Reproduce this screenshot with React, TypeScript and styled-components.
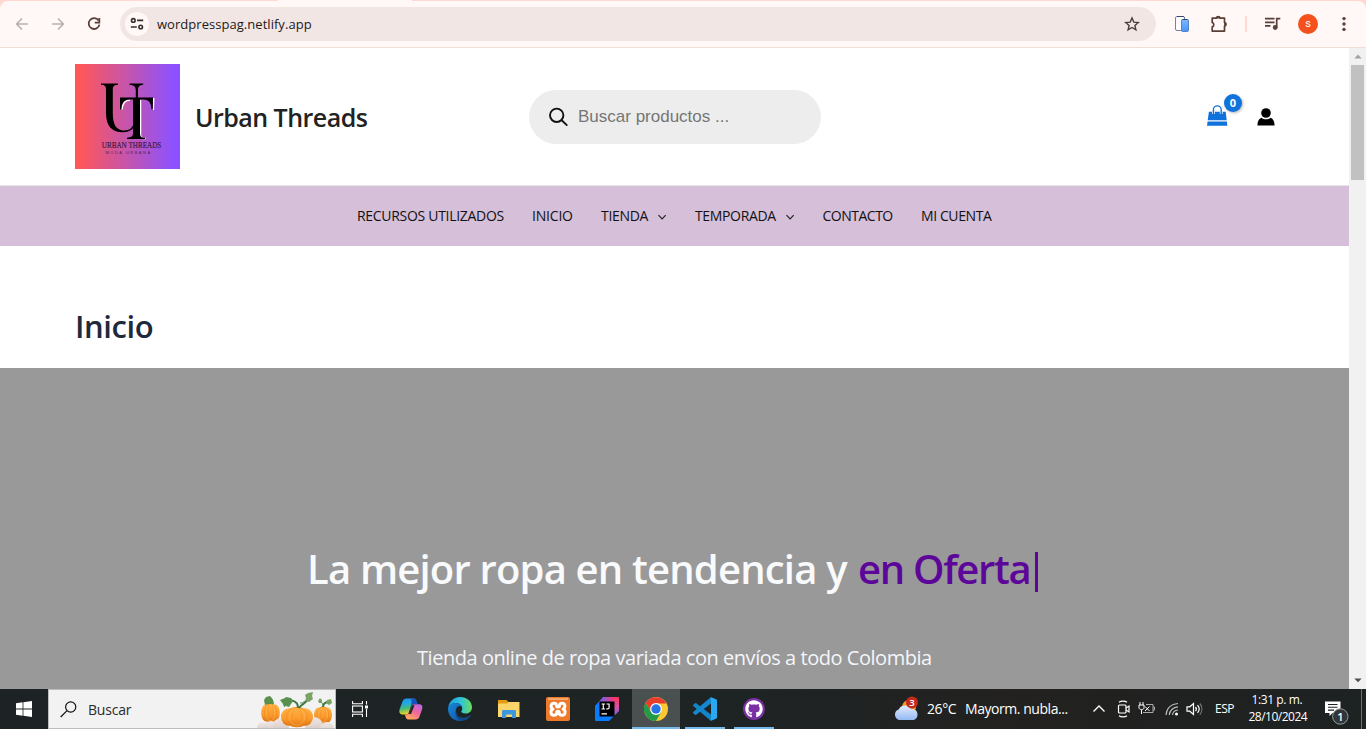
import React from "react";
import styled, { createGlobalStyle } from "styled-components";
import { FaGithub } from "react-icons/fa";

const Global = createGlobalStyle`
  * { box-sizing: border-box; }
  body { margin: 0; background: #fff; overflow: hidden; }
  svg { display: block; flex: none; }
`;

const ui = `"Segoe UI", "Open Sans", "Noto Sans", sans-serif`;

const Screen = styled.div`
  width: 1366px;
  height: 729px;
  display: flex;
  flex-direction: column;
  font-family: ${ui};
  overflow: hidden;
`;

/* Each label keeps a fixed advance so neighbouring items stay aligned. */
const Label = styled.span<{ $size: number; $w: number; $ls?: number; $weight?: number; $color?: string }>`
  display: block;
  flex: none;
  width: ${(p) => p.$w}px;
  font-size: ${(p) => p.$size}px;
  letter-spacing: ${(p) => p.$ls ?? 0}px;
  font-weight: ${(p) => p.$weight ?? 400};
  color: ${(p) => p.$color ?? "inherit"};
  white-space: nowrap;
`;

/* ---------- browser chrome ---------- */

const TabStrip = styled.div`
  height: 48px;
  flex: none;
  background: linear-gradient(90deg, #ffd9cf 278px, #fff8f6 278px, #fff8f6 412px, #ffd9cf 412px);
  padding-top: 1px;
`;

const Toolbar = styled.div`
  height: 47px;
  background: #fff8f6;
  border-radius: 8px 8px 0 0;
  border-bottom: 1px solid #f5ddd7;
  display: flex;
  align-items: center;
  padding-left: 14px;
`;

const NavButtons = styled.div`
  display: flex;
  gap: 20px;
  width: 106px;
`;

const Omnibox = styled.div`
  width: 1036px;
  height: 34px;
  border-radius: 17px;
  background: #f2e6e5;
  display: flex;
  align-items: center;
  justify-content: space-between;
  padding: 0 16px 0 5px;
`;

const Address = styled.div`
  display: flex;
  align-items: center;
  gap: 8px;
`;

const SiteChip = styled.div`
  width: 24px;
  height: 24px;
  border-radius: 50%;
  background: #fff8f6;
  display: grid;
  place-items: center;
`;

const Actions = styled.div`
  display: flex;
  align-items: center;
  padding-left: 17px;
`;

const Extension = styled.div`
  margin-right: 18px;
`;

const Divider = styled.div`
  width: 2px;
  height: 16px;
  margin: 0 17px 0 16px;
  background: #ffd9cf;
`;

const Avatar = styled.div`
  width: 20px;
  height: 20px;
  margin: 0 22px 0 16px;
  border-radius: 50%;
  background: #f4511e;
  color: #fff;
  font: 400 11px/20px Roboto, sans-serif;
  text-align: center;
`;

/* ---------- page ---------- */

const Viewport = styled.div`
  display: flex;
  height: 641px;
  flex: none;
`;

const Page = styled.main`
  width: 1349px;
  display: flex;
  flex-direction: column;
`;

const Header = styled.header`
  height: 138px;
  flex: none;
  border-bottom: 1px solid #e8e4ea;
  padding: 16px 74px 0 75px;
  display: flex;
  align-items: flex-start;
`;

const Brand = styled.div`
  width: 454px;
  display: flex;
  align-items: center;
  gap: 15px;
`;

const SearchBox = styled.div`
  width: 292px;
  height: 54px;
  margin-top: 26px;
  border-radius: 27px;
  background: #ededed;
  display: flex;
  align-items: center;
  gap: 9px;
  padding-left: 20px;
`;

const Placeholder = styled.span`
  font: 17px/24px "Liberation Sans", Arial, sans-serif;
  color: #757575;
`;

const HeaderIcons = styled.div`
  margin: 40px 0 0 auto;
  display: flex;
  gap: 29px;
  align-items: flex-start;
`;

const Cart = styled.div`
  position: relative;
  width: 22px;
  padding-top: 1px;
`;

const CartCount = styled.span`
  position: absolute;
  top: -10px;
  left: 18px;
  width: 18px;
  height: 18px;
  border-radius: 50%;
  background: #1073dc;
  color: #fff;
  font: 700 11px/18px ${ui};
  text-align: center;
  box-shadow: 1px 1px 3px rgba(0, 0, 0, 0.3);
`;

const Menu = styled.nav`
  height: 60px;
  flex: none;
  background: #d5bfd9;
  display: flex;
  align-items: center;
  padding: 0 0 2px 357px;
  gap: 28px;
  color: #111;
`;

const MenuItem = styled.div`
  display: flex;
  align-items: center;
  gap: 9px;

  svg {
    margin-top: 3px;
  }
`;

const TitleBar = styled.div`
  height: 122px;
  flex: none;
  padding: 56px 0 0 75px;
  line-height: 48px;
`;

const Hero = styled.section`
  flex: 1;
  background: #999;
  display: flex;
  flex-direction: column;
  align-items: flex-start;
  padding-top: 171px;
`;

const HeroTitle = styled.h2`
  margin: 0 0 0 307px;
  display: flex;
  line-height: 60px;
  color: #f9fafc;
`;

const Caret = styled.i`
  width: 3px;
  height: 40px;
  margin-top: 13px;
  background: #5c0799;
`;

const HeroText = styled.div`
  margin: 43px 0 0 417px;
  line-height: 32px;
`;

const Scrollbar = styled.div`
  width: 17px;
  background: #f1f1f1;
  display: flex;
  flex-direction: column;
  align-items: center;
  justify-content: space-between;
`;

const ScrollTop = styled.div`
  display: flex;
  flex-direction: column;
  align-items: center;
`;

const ScrollArrow = styled.div`
  width: 17px;
  height: 17px;
  display: grid;
  place-items: center;
`;

const Thumb = styled.div`
  width: 13px;
  height: 115px;
  background: #c1c1c1;
`;

/* ---------- taskbar ---------- */

const Taskbar = styled.footer`
  height: 40px;
  flex: none;
  background: linear-gradient(90deg, #1d2324, #1e2324 55%, #22211f 75%, #1d2222);
  display: flex;
  color: #fff;
`;

const Cell = styled.div<{ $active?: boolean; $open?: boolean }>`
  width: 48px;
  height: 40px;
  flex: none;
  display: grid;
  place-items: center;
  background: ${(p) =>
    p.$active
      ? "linear-gradient(#76b9ed, #76b9ed) bottom / 100% 2px no-repeat, #4a4f50"
      : p.$open
      ? "linear-gradient(#76b9ed, #76b9ed) bottom / 40px 2px no-repeat"
      : "none"};
`;

const Apps = styled.div`
  display: flex;
  gap: 1px;
  margin-left: 3px;
  width: 506px;
`;

const TaskSearch = styled.div`
  width: 288px;
  height: 40px;
  border: 1px solid #bcbcbc;
  background: #f2f2f2;
  display: flex;
  align-items: center;
  padding-left: 11px;
  gap: 11px;
  color: #2b2b2b;
`;

const Tray = styled.div`
  display: flex;
  align-items: center;
  height: 40px;
`;

const Forecast = styled.div`
  display: flex;
  gap: 1px;
  margin: 0 0 1px 8px;
`;

const Language = styled.div`
  margin: 0 0 2px 9px;
`;

const Clock = styled.div`
  width: 60px;
  margin: 0 0 2px 13px;
  display: flex;
  flex-direction: column;
  align-items: center;
  line-height: 17px;
`;

const Notice = styled.div`
  margin-left: 16px;
  padding-top: 7px;
`;

const ShowDesktop = styled.div`
  width: 1px;
  height: 40px;
  margin-left: 11px;
  background: #6c6f70;
`;

/* ---------- drawings ---------- */

const Arrow = ({ flip }: { flip?: boolean }) => (
  <svg width="16" height="16" viewBox="0 0 16 16" fill="none" stroke="#bdaeab" strokeWidth="1.6" transform={flip ? "scale(-1 1)" : undefined}>
    <path d="M14 8H3M8 2.5 2.6 8 8 13.5" />
  </svg>
);

const Reload = () => (
  <svg width="16" height="16" viewBox="0 0 16 16" fill="none" stroke="#5a3f39" strokeWidth="1.8">
    <path d="M12.6 4.6A5.4 5.4 0 1 0 13.4 8.6" />
    <path d="M13.3 2v4.6H8.8" />
  </svg>
);

const Tune = () => (
  <svg width="14" height="14" viewBox="0 0 14 14" fill="none" stroke="#352f2e" strokeWidth="1.6">
    <circle cx="3.3" cy="3.4" r="1.8" />
    <path d="M7 3.4h6.2M.8 10h6" />
    <circle cx="10.7" cy="10" r="1.8" />
  </svg>
);

const Star = () => (
  <svg width="16" height="16" viewBox="0 0 16 16" fill="none" stroke="#453f3e" strokeWidth="1.4" strokeLinejoin="miter">
    <path d="m8 2 1.8 4.1 4.5.4-3.4 3 1 4.3L8 11.5l-3.9 2.3 1-4.3-3.4-3 4.5-.4z" />
  </svg>
);

const Devices = () => (
  <svg width="18" height="18" viewBox="0 0 18 18">
    <defs>
      <linearGradient id="phone" x2="0" y2="1"><stop stopColor="#7db8ff" /><stop offset="1" stopColor="#4a93f6" /></linearGradient>
    </defs>
    <rect x="2.5" y="1.5" width="9" height="14" rx="1.5" fill="#fff" stroke="#7483a0" />
    <path d="M4 1.5h6.500l1 1" fill="none" stroke="#33466e" />
    <rect x="8.5" y="4.5" width="7" height="12" rx="1.2" fill="url(#phone)" stroke="#5583c8" />
    <path d="M9.5 4.5h5" stroke="#2d4170" />
  </svg>
);

const Puzzle = () => (
  <svg width="20" height="20" viewBox="0 0 20 20" fill="none" stroke="#5a3f39" strokeWidth="1.7" strokeLinejoin="round">
    <path d="M3.2 4.2H7.4a1.9 1.9 0 0 1 3.7 0h4.4v4.3a1.9 1.9 0 0 1 0 3.6v5H3.2v-4.2a2.4 2.4 0 0 0 0-4.5z" />
    <path d="M7.8 3.6a1.5 1.3 0 0 1 2.9 0zM16 8.9a1.4 1.5 0 0 1 0 2.8z" fill="#5a3f39" />
  </svg>
);

const MusicList = () => (
  <svg width="18" height="16" viewBox="0 0 18 16" fill="none" stroke="#5a3f39" strokeWidth="1.7">
    <path d="M1 2.7h9.500M1 6.300h9.500M1 9.900h5.500M12.7 11.5V2.700h3.600" />
    <circle cx="11.2" cy="11.5" r="2.4" fill="#5a3f39" stroke="none" />
  </svg>
);

const Kebab = () => (
  <svg width="8" height="18" viewBox="0 0 8 18" fill="#5a3f39">
    <circle cx="4" cy="3.6" r="1.7" />
    <circle cx="4" cy="9" r="1.7" />
    <circle cx="4" cy="14.4" r="1.7" />
  </svg>
);

const Logo = () => (
  <svg width="105" height="105" viewBox="0 0 105 105">
    <defs>
      <linearGradient id="brand">
        <stop offset=".04" stopColor="#ff5757" />
        <stop offset=".94" stopColor="#8c52ff" />
      </linearGradient>
    </defs>
    <rect width="105" height="105" fill="url(#brand)" />
    <g fill="none" stroke="#fff" strokeWidth="1.5">
      <path d="M47 45.500c.5-6 3-9.500 8-9.500M78.700 34l-.4 12M65.500 36v35c0 2 1.500 3.400 5 3.400" />
    </g>
    <g fill="#000">
      <path d="M26 19.500h17v1.200c-4 .3-5.200 1.200-5.200 5V49c0 11 3 17.500 11.500 17.500 5 0 8-3 9-6v3.500c-2 2.500-5.500 4.300-10.500 4.300C36 68.300 31 61 31 49V25.700c0-3.800-1-4.700-5-5z" />
      <path d="M54.500 19.500h13.700v1.200c-4 .4-5.200 1.800-5.200 6V34h-2.200v-7.300c0-4.200-1.800-5.600-6.300-6z" />
      <path d="M45 33.500h33l-.2 12h-1.300c-.4-6.500-2.500-10-8-10H65V69c0 4 1.500 4.400 5 4.700v1.200H52v-1.200c4-.3 6-1 6-4.700V35.500h-3.500c-5.500 0-7.800 3.500-8.200 10H45z" />
    </g>
    <text x="26.800" y="83.800" textLength="59.5" lengthAdjust="spacingAndGlyphs" fontFamily="Liberation Serif, serif" fontSize="8.3" fill="#3a1840" stroke="#3a1840" strokeWidth=".15">URBAN THREADS</text>
    <text x="30.500" y="90.200" textLength="44.5" fontFamily="Liberation Sans, sans-serif" fontSize="3.9" fill="#4b2460">MODA URBANA</text>
  </svg>
);

const Magnifier = () => (
  <svg width="20" height="20" viewBox="0 0 20 20" fill="none" stroke="#111" strokeWidth="1.9">
    <circle cx="7.7" cy="8.3" r="6.7" />
    <path d="m12.7 13.3 5.6 5.3" />
  </svg>
);

const Bag = () => (
  <svg width="22" height="22" viewBox="0 0 22 22">
    <path d="M2.9 6.700h16.800l1 8.600H1.700zM1.600 16.400h19.300l.4 4.400H1z" fill="#1073dc" />
    <path d="M7.4 9V4.800a3.900 3.900 0 0 1 7.800 0V9" fill="none" stroke="#fff" strokeWidth="2.8" />
    <path d="M7.4 9V4.800a3.900 3.900 0 0 1 7.800 0V9" fill="none" stroke="#1073dc" strokeWidth="1.4" />
  </svg>
);

const Person = () => (
  <svg width="18" height="22" viewBox="0 0 18 22">
    <circle cx="9" cy="9" r="4.8" />
    <path d="M.4 21.500c0-4 1.500-6.700 4-7.700 2.700 2 6.500 2 9.200 0 2.500 1 4 3.700 4 7.700z" />
  </svg>
);

const Chevron = () => (
  <svg width="10" height="8" viewBox="0 0 10 8" fill="none" stroke="#222" strokeWidth="1.2">
    <path d="m1.500 2.200 3.600 3.600 3.600-3.600" />
  </svg>
);

const Triangle = ({ down }: { down?: boolean }) => (
  <svg width="8" height="5" viewBox="0 0 8 5">
    <path d={down ? "M.3.500h7.400L4 4.300z" : "M.3 4.500h7.400L4 .5z"} fill={down ? "#505050" : "#a3a3a3"} />
  </svg>
);

const Windows = () => (
  <svg width="16" height="16" viewBox="0 0 16 16" fill="#fff">
    <path d="M0 2.200 6.600 1.300v6.300H0zM7.400 1.200 16 0v7.600H7.400zM0 8.400h6.600v6.300L0 13.800zM7.400 8.400H16V16l-8.600-1.200z" />
  </svg>
);

const TaskGlass = () => (
  <svg width="17" height="17" viewBox="0 0 17 17" fill="none" stroke="#111" strokeWidth="1.2">
    <circle cx="10.7" cy="6" r="5.1" />
    <path d="M7 9.700.7 16" />
  </svg>
);

const Gourd = ({ x, y, rx, ry }: { x: number; y: number; rx: number; ry: number }) => (
  <g>
    <ellipse cx={x - rx * 0.5} cy={y} rx={rx * 0.5} ry={ry * 0.85} fill="url(#gourd)" />
    <ellipse cx={x + rx * 0.5} cy={y} rx={rx * 0.5} ry={ry * 0.85} fill="url(#gourd)" />
    <ellipse cx={x} cy={y} rx={rx * 0.82} ry={ry} fill="url(#gourd)" />
    <g fill="none" strokeWidth=".7" opacity=".7">
      <ellipse cx={x} cy={y} rx={rx * 0.66} ry={ry * 0.92} stroke="#e9851a" />
      <ellipse cx={x} cy={y} rx={rx * 0.3} ry={ry * 0.95} stroke="#ef9026" />
      <ellipse cx={x} cy={y} rx={rx * 0.48} ry={ry * 0.8} stroke="#ffbd5c" />
    </g>
  </g>
);

const Pumpkins = () => (
  <svg width="78" height="38" viewBox="0 0 78 38">
    <defs>
      <linearGradient id="gourd" x2="0" y2="1">
        <stop stopColor="#ffb347" />
        <stop offset=".6" stopColor="#fb9a2c" />
        <stop offset="1" stopColor="#dd7212" />
      </linearGradient>
      <linearGradient id="stone" x2="0" y2="1">
        <stop stopColor="#f1e9e7" />
        <stop offset="1" stopColor="#cdbfbb" />
      </linearGradient>
    </defs>
    <Gourd x={13.5} y={23} rx={9.3} ry={10} />
    <Gourd x={66} y={25} rx={9} ry={8.8} />
    <g fill="url(#stone)">
      <circle cx="6" cy="38" r="6" /><circle cx="14" cy="38" r="7" /><circle cx="24" cy="36" r="8" /><circle cx="57" cy="36" r="9" /><circle cx="70" cy="39" r="7" />
    </g>
    <Gourd x={40} y={27} rx={16} ry={10.3} />
    <g fill="none" stroke="#3f7a45" strokeWidth="2">
      <path d="M41 18c0-4-1-6-6-7.500M42 18c2-4 7-4 9-9M15 14c1-3 0-5-3-7M66 17c0-3 1-4 4-5" />
      <path d="M50 11c-3-1-4 3-7 2M66 15l-2-4" strokeWidth=".8" />
    </g>
    <g fill="#5b8f4d">
      <path d="m23 10 5-2 1-1 5 1 2 3-2 3-2 3-3-1-2 1-1-3z" />
      <path d="m48 5 3-2 5-1-1 4 1 3-4 3-4-1 1-3z" fill="#7aa365" />
      <path d="m7 10 2-3 4-1 3 4 1 4-5 0-4 1z" />
      <path d="m61 11 2-3 2 2 0 3-3 0zM70 10l4-1 1 4-3 2-3-2z" fill="#7aa365" />
    </g>
  </svg>
);

const TaskView = () => (
  <svg width="18" height="16" viewBox="0 0 18 16" fill="none" stroke="#fff" strokeWidth="1.1">
    <path d="M1.600 0v2.700h9.800V0M1.600 16v-2.700h9.800v2.700M15.500 0v3.500M15.500 8v8" />
    <rect x="1.6" y="5" width="9.8" height="6" />
    <path d="M14 4.500h3v3h-3z" fill="#fff" stroke="none" />
  </svg>
);

const Copilot = () => (
  <svg width="24" height="24" viewBox="0 0 24 24">
    <defs>
      <linearGradient id="cpA" x2=".2" y2="1"><stop stopColor="#1b8fe8" /><stop offset=".35" stopColor="#22a8e6" /><stop offset=".65" stopColor="#43bb7c" /><stop offset="1" stopColor="#f2d321" /></linearGradient>
      <linearGradient id="cpB" x1=".9" x2=".3" y2="1"><stop stopColor="#b366ea" /><stop offset=".5" stopColor="#f0679f" /><stop offset="1" stopColor="#ffa95a" /></linearGradient>
    </defs>
    <path d="M7.500 1.500h7c2 0 2.600 1.700 3.200 3.500l.6 2h-3c-2.500 0-3.200 1.500-4 4l-1.600 4.500c-.5 1.500-1.200 2-2.600 2H3.500C.5 17.500-.3 15 .7 12L3.500 4.500c.8-2.200 2-3 4-3z" fill="url(#cpA)" />
    <path d="M12.500 1.500h2c2 0 2.600 1.700 3.200 3.500l.6 2h-3c-1.500 0-2.400.5-3 1.500z" fill="#1c4fc4" />
    <path d="M16.500 22.500h-7c-2 0-2.600-1.700-3.200-3.500l-.5-1.500h1.500c2 0 3-1.500 3.700-3.500l1.600-4.500c.5-1.500 1.400-2.200 2.900-2.200h4.500c3.200 0 4 2.200 3 5.200l-2.500 7c-.8 2.200-2 3-4 3z" fill="url(#cpB)" />
    <path d="M13.300 8.200h2.200L12 17H9.800z" fill="#1e2324" />
  </svg>
);

const Edge = () => (
  <svg width="24" height="24" viewBox="0 0 24 24">
    <defs>
      <linearGradient id="edA"><stop stopColor="#1d9de5" /><stop offset=".55" stopColor="#2fc4da" /><stop offset="1" stopColor="#6bdd55" /></linearGradient>
      <linearGradient id="edB" y2="1"><stop stopColor="#1789db" /><stop offset="1" stopColor="#1151a4" /></linearGradient>
    </defs>
    <path d="M0 12C.3 5 5.500 0 12 0c7 0 12 4.800 12 10.200 0 4-3 6.300-6.500 6.300-3 0-4.200-1-4.200-1.900 0-.6 1-1.200 1-3C14.300 8.500 11.500 6 8 6c-4 0-7.500 2.500-8 6z" fill="url(#edA)" />
    <path d="M0 12c.5-4 4-6 7.800-6 3 0 5 1.400 6 3.400C9 8 8 12 8 14c0 5 4 9.300 7 9.500-1 .4-2 .5-3 .5C5 24 0 18.500 0 12z" fill="url(#edB)" />
    <path d="M8.600 10.500C6 16 10 21 15 20.800c3 0 5.500-1.300 7.200-2.600.5-.3.900.1.600.6C20.500 22 17 24 13.500 23.800 9 23.400 5.200 16 8.600 10.500z" fill="#114a8b" />
  </svg>
);

const Folder = () => (
  <svg width="24" height="24" viewBox="0 0 24 24">
    <path d="M1 3h8.500l2 2H22v3H1z" fill="#e29b12" />
    <path d="M1 6.500h9.500l1-1.500H22.500V20H1z" fill="#fdd568" />
    <path d="M5 21v-6.500c0-1 .5-1.500 1.500-1.500h11c1 0 1.500.5 1.500 1.500V21h-4v-3.500H9.200V21z" fill="#3b97de" />
  </svg>
);

const Xampp = () => (
  <svg width="24" height="24" viewBox="0 0 24 24">
    <rect width="24" height="24" rx="2" fill="#ed7a2a" />
    <path d="M2 1h20v2H2z" fill="#f8a568" />
    <path d="M8 6.200c1.800 0 2.500.8 2.500 2.300 0 1.200.5 1.500 1.500 1.500s1.500-.3 1.500-1.500c0-1.500.7-2.300 2.500-2.300 3.600 0 3.600 4.600 1 5.800 3 1.200 2.800 6.300-1 6.300-1.800 0-2.700-.8-2.700-2.300 0-1.300-.4-1.700-1.300-1.700s-1.300.4-1.300 1.700c0 1.500-.9 2.300-2.700 2.300-3.800 0-4-5.100-1-6.300-2.600-1.200-2.600-5.800 1-5.800z" fill="none" stroke="#fff" strokeWidth="3" strokeLinejoin="round" />
  </svg>
);

const IntelliJ = () => (
  <svg width="24" height="24" viewBox="0 0 24 24">
    <defs>
      <linearGradient id="ij" x1="0" y1=".2" x2="1" y2=".2"><stop stopColor="#2f72f0" /><stop offset=".35" stopColor="#8b5bd0" /><stop offset=".65" stopColor="#d93f91" /><stop offset=".9" stopColor="#fe315d" /></linearGradient>
      <linearGradient id="ijSide" x2="0" y2="1"><stop stopColor="#fe315d" /><stop offset=".5" stopColor="#d8539f" /><stop offset="1" stopColor="#5a6ee8" /></linearGradient>
    </defs>
    <path d="M8 0h14c1.500 0 2 .5 2 2v12H0V9z" fill="url(#ij)" />
    <path d="M19 0h3c1.500 0 2 .5 2 2v12l-6 6V4z" fill="url(#ijSide)" />
    <path d="M0 9 5 5v14h14l-5 5H1.500C.5 24 0 23.500 0 22.500z" fill="#087cfa" />
    <path d="M4.500 4.500h15v15h-15z" fill="#000" />
    <g fill="none" stroke="#fff" strokeWidth="1.2">
      <path d="M6.500 7h3.600M8.300 7v5M6.500 12h3.600M11.500 7h2.600v3.500c0 1.200-1.300 1.800-2.800 1.200M6.500 16.800h5.500" />
    </g>
  </svg>
);

const Chrome = () => (
  <svg width="24" height="24" viewBox="0 0 24 24">
    <circle cx="12" cy="12" r="12" fill="#fcc934" />
    <path d="M1.600 6A12 12 0 0 1 22.400 6.500H12L7.200 14.800z" fill="#e63b2e" />
    <path d="M1.600 6A12 12 0 0 0 12 24l5-8.800H7.200z" fill="#229a48" />
    <circle cx="12" cy="12" r="5.9" fill="#fff" />
    <circle cx="12" cy="12" r="4.7" fill="#2474e8" />
  </svg>
);

const VsCode = () => (
  <svg width="24" height="24" viewBox="0 0 24 24">
    <path d="m0 8 2-1.700c.4-.3.7-.3 1.200 0L18 17.500V24L.2 9c-.4-.4-.4-.7-.2-1z" fill="#1284c8" />
    <path d="m0 16 2 1.700c.4.300.7.300 1.200 0L18 6.500V0L.2 15c-.4.400-.4.700-.2 1z" fill="#1487cf" />
    <path d="M17.500 0 23 2.300c.7.300 1 .7 1 1.500v16.400c0 .8-.3 1.200-1 1.500L17.500 24c1 .4 0-1 .5-2V2c-.5-1 .5-2-.5-2z" fill="#2aa9f2" />
  </svg>
);

const GithubDisc = styled.div`
  width: 22px;
  height: 22px;
  border-radius: 50%;
  background: #7b30a6;
  color: #fff;
  display: grid;
  place-items: center;
`;

const Weather = () => (
  <svg width="26" height="26" viewBox="0 0 26 26">
    <defs>
      <linearGradient id="cloud" x2="0" y2="1"><stop stopColor="#e4edfd" /><stop offset="1" stopColor="#93b9f2" /></linearGradient>
    </defs>
    <circle cx="16" cy="11" r="7" fill="#f39a1d" />
    <path d="M6 24a5.500 5.500 0 0 1-.3-10.500 7 7 0 0 1 12.500-.5c3.500-.5 6.300 1.800 6.300 5.500 0 3-2 5.500-4.500 5.500z" fill="url(#cloud)" />
    <circle cx="19" cy="6.5" r="6" fill="#c42b1c" />
    <text x="19" y="10" textAnchor="middle" fontFamily="Open Sans, sans-serif" fontWeight="600" fontSize="9.5" fill="#fff">3</text>
  </svg>
);

const TrayIcons = () => (
  <svg width="114" height="20" viewBox="0 0 114 20" fill="none" stroke="#fff" strokeWidth="1.2">
    <path d="m1.500 12.500 5.500-5.500 5.500 5.500" strokeWidth="1.4" />
    <g>
      <rect x="26.5" y="6" width="7.5" height="8" rx="1" />
      <path d="m34 9 3-2v6l-3-2M27 3.200c2-1.500 6-1.500 8 0M27 16.800c2 1.500 6 1.500 8 0" />
    </g>
    <g strokeWidth="1">
      <path d="M48 3v3M51 3v3M47 6h5v2.500c0 1.500-1 2-2.500 2S47 10 47 8.500zM49.500 11v4" />
      <path d="M54 5.500h7v8h-10M61 8h1.500v3H61" stroke="#aaa" />
      <path d="m53 7.500 4.500 4.500M57.500 7.500 53 12" />
    </g>
    <g stroke="#bbb">
      <path d="M74 16C74.500 9.500 79 5 86 4.500M77.300 16c.3-4.700 4-8 8.700-8.200M80.500 16c.3-2.800 2.500-4.800 5.500-5" />
      <circle cx="84.5" cy="15" r="1.5" fill="#fff" stroke="none" />
    </g>
    <g>
      <path d="M95 7.800h2.800L101.500 4.500v11l-3.700-3.300H95z" />
      <path d="M103.500 8c1 1.200 1 3 0 4.200M105.500 6.200c2 2.300 2 5.500 0 7.700" />
      <path d="M107.800 4.500c2.800 3.300 2.800 7.800 0 11.200" stroke="#777" />
    </g>
  </svg>
);

const NoticeIcon = () => (
  <svg width="26" height="26" viewBox="0 0 26 26">
    <path d="M1 1.500h15.500v11.500H8.500L5.500 16v-3H1z" fill="#fff" />
    <path d="M4 4.500h9.500M4 7.300h9.500M4 10.100h6" stroke="#1d2222" strokeWidth="1.1" />
    <circle cx="16.300" cy="16.500" r="7.700" fill="#30363a" stroke="#9a9c9c" />
    <text x="16.300" y="20.500" textAnchor="middle" fontFamily="Open Sans, sans-serif" fontWeight="600" fontSize="11" fill="#fff">1</text>
  </svg>
);

const menu: { text: string; w: number; ls: number; sub?: boolean }[] = [
  { text: "RECURSOS UTILIZADOS", w: 147, ls: -0.3 },
  { text: "INICIO", w: 41, ls: -0.2 },
  { text: "TIENDA", w: 47, ls: -0.3, sub: true },
  { text: "TEMPORADA", w: 80.5, ls: -0.35, sub: true },
  { text: "CONTACTO", w: 70.5, ls: -0.5 },
  { text: "MI CUENTA", w: 72, ls: -0.4 },
];

export default function App() {
  return (
    <Screen>
      <Global />
      <TabStrip>
        <Toolbar>
          <NavButtons>
            <Arrow />
            <Arrow flip />
            <Reload />
          </NavButtons>
          <Omnibox>
            <Address>
              <SiteChip><Tune /></SiteChip>
              <Label $size={13} $w={160} $ls={0.04} $color="#231a18">wordpresspag.netlify.app</Label>
            </Address>
            <Star />
          </Omnibox>
          <Actions>
            <Extension><Devices /></Extension>
            <Puzzle />
            <Divider />
            <MusicList />
            <Avatar>s</Avatar>
            <Kebab />
          </Actions>
        </Toolbar>
      </TabStrip>

      <Viewport>
        <Page>
          <Header>
            <Brand>
              <Logo />
              <Label $size={25} $w={180} $ls={-0.53} $weight={600} $color="#222">Urban Threads</Label>
            </Brand>
            <SearchBox>
              <Magnifier />
              <Placeholder>Buscar productos ...</Placeholder>
            </SearchBox>
            <HeaderIcons>
              <Cart>
                <Bag />
                <CartCount>0</CartCount>
              </Cart>
              <Person />
            </HeaderIcons>
          </Header>
          <Menu>
            {menu.map((m) => (
              <MenuItem key={m.text}>
                <Label $size={14} $w={m.w} $ls={m.ls}>{m.text}</Label>
                {m.sub && <Chevron />}
              </MenuItem>
            ))}
          </Menu>
          <TitleBar>
            <Label $size={31} $w={90} $ls={-0.4} $weight={600} $color="#1e293b">Inicio</Label>
          </TitleBar>
          <Hero>
            <HeroTitle>
              <Label $size={40} $w={551} $ls={-0.81} $weight={600}>La mejor ropa en tendencia y</Label>
              <Label $size={40} $w={177} $ls={-1.3} $weight={600} $color="#5c0799">en Oferta</Label>
              <Caret />
            </HeroTitle>
            <HeroText>
              <Label $size={20} $w={520} $ls={-0.46} $color="#f4f6fa">Tienda online de ropa variada con envíos a todo Colombia</Label>
            </HeroText>
          </Hero>
        </Page>
        <Scrollbar>
          <ScrollTop>
            <ScrollArrow><Triangle /></ScrollArrow>
            <Thumb />
          </ScrollTop>
          <ScrollArrow><Triangle down /></ScrollArrow>
        </Scrollbar>
      </Viewport>

      <Taskbar>
        <Cell><Windows /></Cell>
        <TaskSearch>
          <TaskGlass />
          <Label $size={14} $w={158} $ls={-0.2}>Buscar</Label>
          <Pumpkins />
        </TaskSearch>
        <Cell><TaskView /></Cell>
        <Apps>
          <Cell><Copilot /></Cell>
          <Cell><Edge /></Cell>
          <Cell><Folder /></Cell>
          <Cell><Xampp /></Cell>
          <Cell><IntelliJ /></Cell>
          <Cell $active><Chrome /></Cell>
          <Cell $open><VsCode /></Cell>
          <Cell $open><GithubDisc><FaGithub size={18} /></GithubDisc></Cell>
        </Apps>
        <Tray>
          <Weather />
          <Forecast>
            <Label $size={14} $w={37} $ls={-0.4}>26°C</Label>
            <Label $size={14} $w={127} $ls={-0.45}>Mayorm. nubla...</Label>
          </Forecast>
          <TrayIcons />
          <Language><Label $size={12} $w={20} $ls={-0.5}>ESP</Label></Language>
          <Clock>
            <Label $size={12} $w={53} $ls={-0.4}>1:31 p. m.</Label>
            <Label $size={12} $w={59} $ls={-0.5}>28/10/2024</Label>
          </Clock>
          <Notice><NoticeIcon /></Notice>
          <ShowDesktop />
        </Tray>
      </Taskbar>
    </Screen>
  );
}
